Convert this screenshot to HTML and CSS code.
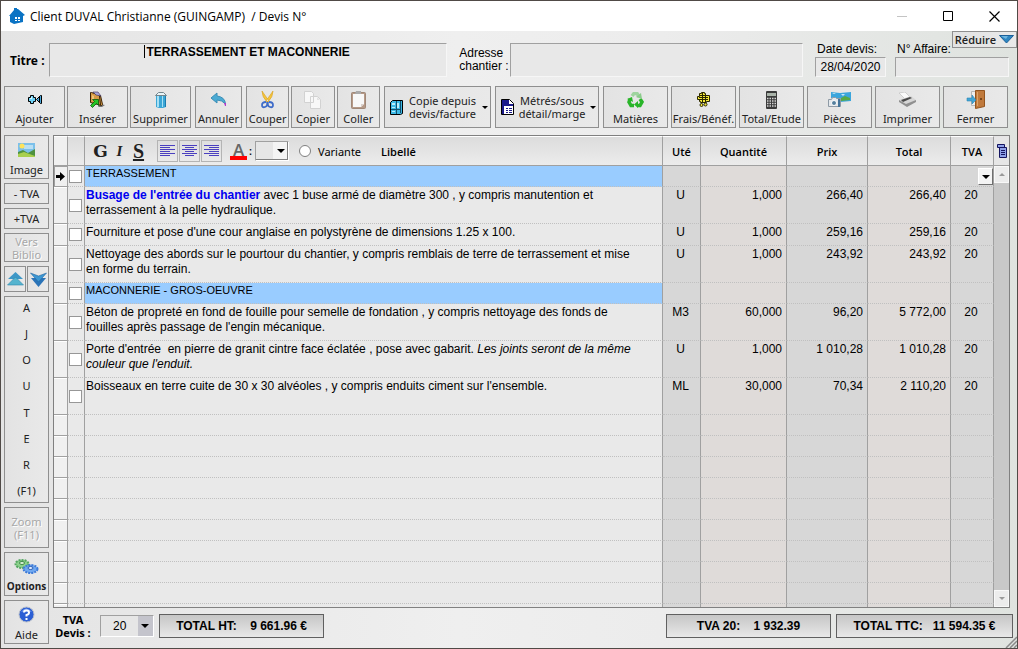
FILE: index.html
```html
<!DOCTYPE html>
<html lang="fr">
<head>
  <meta charset="UTF-8" />
  <meta name="viewport" content="width=device-width, initial-scale=1.0" />
  <title>Client DUVAL Christianne (GUINGAMP) / Devis N°</title>
  <link rel="stylesheet" href="styles.css">
</head>
<body>
<header class="titlebar">
  <svg class="logo" width="16" height="16" viewBox="0 0 16 16"><path fill="#0a73c4" d="M0 8 5 2V0h3v1l1 0 7 6-2 1v6l-9 2-4-2V8z"/><path fill="#fff" d="M6 9h2v2H6zM9 9h2v2H9zM6 12h2v1H6zM9 12h2v1H9z"/></svg>
  <h1>Client DUVAL Christianne (GUINGAMP)&nbsp; / Devis N°</h1>
  <div class="window-buttons">
    <button aria-label="Minimiser"><svg width="11" height="11" viewBox="0 0 11 11"><path stroke="#c4c4c4" d="M0 5.500h10"/></svg></button>
    <button aria-label="Agrandir"><svg width="11" height="11" viewBox="0 0 11 11"><path fill="none" stroke="#000" d="M.5.5h9v9h-9z"/></svg></button>
    <button aria-label="Fermer la fenêtre"><svg width="11" height="11" viewBox="0 0 11 11"><path fill="none" stroke="#000" stroke-width="1.200" d="M.5.5l10 10m0-10l-10 10"/></svg></button>
  </div>
</header>

<section class="infos">
  <label class="titre-label" for="titre">Titre :</label>
  <div class="titre-box">
    <input class="field" type="text" id="titre" value="TERRASSEMENT ET MACONNERIE">
    <span class="caret"></span>
  </div>
  <label class="adresse-label" for="adresse">Adresse<br>chantier :</label>
  <textarea class="field adresse" id="adresse"></textarea>
  <div class="date-devis">
    <label for="date">Date devis:</label>
    <input class="field" type="text" id="date" value="28/04/2020">
  </div>
  <div class="affaire">
    <div class="affaire-top">
      <label for="affaire">N° Affaire:</label>
      <button class="btn reduire">Réduire <svg width="15" height="9" viewBox="0 0 15 9"><path fill="#2e86c1" stroke="#1b5f99" d="M.5.5h14L7.500 8z"/><path fill="#6db5e0" d="M2 1h7L7 4z"/></svg></button>
    </div>
    <input class="field" type="text" id="affaire">
  </div>
</section>

<nav class="toolbar">
  <div class="group three">
    <button class="btn"><svg width="16" height="16" viewBox="0 0 16 16"><path fill="#6fd3f7" stroke="#000" d="M3.500 3.500h3v2h2v4h-2v2h-3v-2h-2v-4h2z"/><path fill="#d9f5ff" d="M4 5h1v2H3V6h1z"/><path fill="#4aa9dc" stroke="#000" d="M9.500 7.500l4-4h1v8h-1z"/><path stroke="#000" d="M12.500 5v5"/></svg>Ajouter</button>
    <button class="btn"><svg width="17" height="17" viewBox="0 0 17 17"><path fill="#777" d="M11 13l5 1-3 2h-4z"/><path fill="#d69b45" stroke="#3a2205" d="M1.500 1.500h1l9 3 2 9-1 1-11-3z"/><path fill="#a9a7d8" stroke="#3a2a55" stroke-width=".6" d="M4 1h5l3 4-5-1z"/><path fill="#efc27a" d="M3 4l2 1v5l-2-1z"/><path stroke="#3a2205" d="M10.500 5l1 9"/><path fill="#25c425" stroke="#0a570a" stroke-width=".8" d="M1.500 14.500l4-4-2-2h6v6l-2-2-4 4z"/></svg>Insérer</button>
    <button class="btn"><svg width="12" height="17" viewBox="0 0 12 17"><path fill="#3aa6d6" d="M1 4h10v12l-3 1H4l-3-1z"/><path fill="#a7e0f4" d="M2 5h2v11H2zM7 5h1v11H7z"/><path fill="#1c7cae" d="M10 5h1v11h-1z"/><path fill="#e9f4f7" stroke="#73858c" d="M.5 4.500l3-3h5l3 3z"/></svg>Supprimer</button>
  </div>
  <button class="btn"><svg width="17" height="15" viewBox="0 0 17 15"><path fill="#4aaad3" stroke="#3a8eb6" d="M1 6l6-5v3q8 1 8.500 8Q12 8 7 8v3z"/><path fill="#b13bc9" d="M14 11h2v3h-1z"/></svg>Annuler</button>
  <div class="group three">
    <button class="btn"><svg width="13" height="18" viewBox="0 0 13 18"><path fill="#f5c640" stroke="#d79f1d" stroke-width=".6" d="M1 0l7 10-2 1Q1 6 1 0zM12 0L5 10l2 1q5-5 5-11z"/><path fill="none" stroke="#3f6cc9" stroke-width="1.800" d="M5 11q-4 0-4 3t3 2 2-5m2 0q4 0 4 3t-3 2-2-5"/></svg>Couper</button>
    <button class="btn"><svg width="17" height="18" viewBox="0 0 17 18"><path fill="#f8f8f8" stroke="#d2d2d2" d="M.5.500h7l2 2v9h-9zM6.500 5.500h7l3 3v9h-10z"/><path fill="#e3e3e3" d="M13 6v3h3z"/></svg>Copier</button>
    <button class="btn"><svg width="15" height="18" viewBox="0 0 15 18"><rect x=".5" y="1.500" width="14" height="16" rx="1" fill="#b69a88" stroke="#a08878"/><path fill="#f8f8f8" d="M2 3h11v10l-3 3H2z"/><path fill="#d8d0cc" d="M13 13l-3 3v-3z"/><path fill="#aaa" d="M5 0h5v3H4z"/></svg>Coller</button>
  </div>
  <button class="btn wide"><svg width="13" height="16" viewBox="0 0 13 16"><path fill="#3db9e6" stroke="#000" d="M2.500 1.500h10v13l-2 1h-10v-12z"/><path fill="#bcecfa" d="M2 4h3v2H2zM2 8h3v1H2zM7 4h2v5H7zM2 12h3v1H2z"/><path stroke="#12516f" d="M6.500 2v13M10.500 2v12M1 10.500h9"/></svg><span>Copie depuis<br>devis/facture</span><i class="arrow"></i></button>
  <button class="btn wide"><svg width="13" height="16" viewBox="0 0 13 16"><path fill="#fff" stroke="#000" d="M.5.5h8l4 4v11H.5z"/><path fill="#1b1b8c" d="M1 1h7v4h4v2H1zM1 7h2v8H1z"/><path stroke="#1b1b8c" d="M5 9.500h2m1 0h3M5 11.500h2m1 0h3M5 13.500h2m1 0h3"/></svg><span>Métrés/sous<br>détail/marge</span><i class="arrow"></i></button>
  <div class="group six">
    <button class="btn"><svg width="17" height="16" viewBox="0 0 17 16"><g fill="none" stroke-width="3.500"><path stroke="#9fd49f" d="M5 4l2-2.500h3l2 3"/><path stroke="#29b529" d="M13 7l2 3-2 3.500h-3M3 7l-1 3 2 3.500h3"/></g><path fill="#29b529" d="M11 9v7l-4-3.500zM0 7l5-2 1 5z"/><path fill="#8bcb8b" d="M14 1l1 6-6-2z"/></svg>Matières</button>
    <button class="btn"><svg width="15" height="17" viewBox="0 0 15 17"><path fill="#f4e93a" stroke="#2a2600" d="M3.500 2.500h2v-1h3v1h1v2h4v6h-3v1h-6v-1h-1v-2h-2v-3h2z"/><path stroke="#2a2600" d="M3 4.500h6M3 6.500h9M3 8.500h9M6.500 2v9M9.500 4v7"/><circle cx="5.500" cy="14" r="1.500" fill="#f4e93a" stroke="#2a2600"/><circle cx="9.500" cy="13.500" r="1.500" fill="#f4e93a" stroke="#2a2600"/></svg>Frais/Bénéf.</button>
    <button class="btn"><svg width="11" height="18" viewBox="0 0 11 18"><rect width="11" height="18" rx="1" fill="#3b3b3b"/><path fill="#aab4aa" d="M1 2h9v3H1z"/><path stroke="#d6d6d6" stroke-width="1.500" stroke-dasharray="1.500 1" d="M1 7.500h9M1 10h9M1 12.500h9M1 15h9"/></svg>Total/Etude</button>
    <button class="btn"><svg width="24" height="17" viewBox="0 0 24 17"><path fill="#3aa5dc" d="M3 1l9 1v6l-9-1zM12 2l11-1v9l-11 1z"/><path fill="#c7e8f6" d="M13 3h4l-2 2zM4 2h4l-2 1z"/><path fill="#57a944" d="M13 7l4-2 5 2v2l-9 1z"/><path fill="#e4e8ec" stroke="#8e9aa5" d="M.5 8.500h3l1-2h3l1 1h4v8H.5z"/><circle cx="6" cy="12" r="2.500" fill="#547f9e" stroke="#fff"/><path fill="#44749a" d="M10 8h2v8h-2z"/></svg>Pièces</button>
    <button class="btn"><svg width="19" height="15" viewBox="0 0 19 15"><path fill="#fafafa" stroke="#c2c2c2" stroke-width=".7" d="M1 1l6-1 5 5-5 2z"/><path fill="#d6d6d6" d="M1 8l12-4 5 4-10 6z"/><path fill="#4a4a4a" d="M3 8l9-3 2 1-9 4z"/><path fill="#909090" d="M1 8l7 4 10-4v2l-9 5-8-5z"/></svg>Imprimer</button>
    <button class="btn"><svg width="20" height="19" viewBox="0 0 20 19"><path fill="#eee" stroke="#b7b7b7" d="M5.500 1.500h8v14h-8z"/><path fill="#c07a3d" stroke="#94551f" d="M9.500.500h9v16l-9 2z"/><path fill="#dda269" d="M11 2h1v14h-1z"/><circle cx="15" cy="9" r="1" fill="#613610"/><path fill="#42a5d5" stroke="#2b86b5" stroke-width=".6" d="M1 8h5V5l4 5-4 4v-3H1z"/></svg>Fermer</button>
  </div>
</nav>

<main class="content">
  <aside class="sidebar">
    <button class="btn tall"><svg width="17" height="16" viewBox="0 0 17 16"><path fill="#7cc0ea" d="M0 1h17v14H0z"/><path fill="#b9dff3" d="M6 3h9v4H6z"/><path fill="#4f9140" d="M0 10l5-2 5 3 7-4v8H0z"/><path fill="#a8cf4d" d="M0 12l6-2 11 4v1H0z"/><circle cx="4" cy="4" r="2.500" fill="#ffe35a"/></svg>Image</button>
    <button class="btn small">- TVA</button>
    <button class="btn small">+TVA</button>
    <button class="btn biblio" disabled>Vers<br>Biblio</button>
    <div class="fleches">
      <button class="btn" aria-label="Monter"><svg width="17" height="14" viewBox="0 0 17 14"><path fill="#3e97c7" d="M8.500 0L16 7H1z"/><path fill="#55b4cf" stroke="#2f86ad" stroke-width=".6" d="M8.500 5l8 8H.5z"/></svg></button>
      <button class="btn" aria-label="Descendre"><svg width="17" height="15" viewBox="0 0 17 15"><path fill="#2b74b8" d="M1 6h15l-7.500 9z"/><path fill="#3c97d2" stroke="#2468a5" stroke-width=".6" d="M.5 1L8.500 4l8-3-8 9z"/></svg></button>
    </div>
    <button class="btn ajouter"><span>A</span><span>J</span><span>O</span><span>U</span><span>T</span><span>E</span><span>R</span><span>(F1)</span></button>
    <button class="btn zoom" disabled>Zoom<br>(F11)</button>
    <button class="btn tall options"><svg width="25" height="17" viewBox="0 0 25 17"><ellipse cx="8" cy="6" rx="6.500" ry="4" fill="#8bd18b" stroke="#55a661" stroke-width="2" stroke-dasharray="2 1"/><ellipse cx="8" cy="5" rx="2.500" ry="1.500" fill="#e2f5df" stroke="#3d8847"/><ellipse cx="16.500" cy="11" rx="7" ry="4" fill="#6fa8f0" stroke="#3e7bd8" stroke-width="2" stroke-dasharray="2 1"/><ellipse cx="16.500" cy="10" rx="2.500" ry="1.500" fill="#dceafd" stroke="#2c5cb2"/></svg>Options</button>
    <button class="btn tall"><svg width="17" height="17" viewBox="0 0 17 17"><circle cx="8.500" cy="8.500" r="7.500" fill="#2c5fd4" stroke="#b9bfca"/><path fill="#7ea4f3" d="M3 6q5-7 11 0-6-2-11 0z"/><path fill="none" stroke="#fff" stroke-width="2" d="M6 6.500q0-2 2.500-2t2.500 2-2.500 2.500v1.500M8.500 12v2"/></svg>Aide</button>
  </aside>

  <div class="devis">
    <div class="grid">
      <table>
        <colgroup>
          <col class="c-mark"><col class="c-check"><col><col class="c-ute"><col class="c-qte"><col class="c-prix"><col class="c-total"><col class="c-tva">
        </colgroup>
        <thead>
          <tr>
            <th></th>
            <th></th>
            <th>
              <div class="format">
                <button class="gras" aria-label="Gras">G</button>
                <button class="ital" aria-label="Italique">I</button>
                <button class="soul" aria-label="Souligné">S</button>
                <div class="aligns">
                  <button aria-label="Gauche"><svg width="15" height="12" viewBox="0 0 15 12"><path stroke="#4a3fc0" d="M0 .5h15M0 2.500h10M0 4.500h15M0 6.500h10M0 8.500h15M0 10.500h10"/></svg></button>
                  <button aria-label="Centre"><svg width="15" height="12" viewBox="0 0 15 12"><path stroke="#4a3fc0" d="M0 .5h15M3 2.500h9M0 4.500h15M3 6.500h9M0 8.500h15M3 10.500h9"/></svg></button>
                  <button aria-label="Droite"><svg width="15" height="12" viewBox="0 0 15 12"><path stroke="#4a3fc0" d="M0 .5h15M5 2.500h10M0 4.500h15M5 6.500h10M0 8.500h15M5 10.500h10"/></svg></button>
                </div>
                <label class="couleur" for="couleur"><b>A</b>:</label>
                <span class="combo combo-couleur"><select id="couleur"><option></option></select><i class="arrow"></i></span>
                <label class="variante"><input type="radio" name="variante">Variante</label>
                <span>Libellé</span>
              </div>
            </th>
            <th>Uté</th>
            <th>Quantité</th>
            <th>Prix</th>
            <th>Total</th>
            <th>TVA</th>
          </tr>
        </thead>
        <tbody>
          <tr class="chapitre">
            <td class="current"><svg width="9" height="9" viewBox="0 0 9 9"><path d="M0 3h4V0l5 4.500L4 9V6H0z"/></svg></td><td><input type="checkbox" aria-label="Terrassement"></td><td>TERRASSEMENT</td><td></td><td></td><td></td><td></td>
            <td class="tva-cell"><span class="combo combo-tva"><select aria-label="TVA de la ligne"><option></option></select><i class="arrow"></i></span></td>
          </tr>
          <tr class="double">
            <td></td><td><input type="checkbox" aria-label="Busage"></td><td><b class="lien">Busage de l'entrée du chantier</b> avec 1 buse armé de diamètre 300 , y compris manutention et<br>terrassement à la pelle hydraulique.</td><td>U</td><td>1,000</td><td>266,40</td><td>266,40</td><td>20</td>
          </tr>
          <tr class="simple">
            <td></td><td><input type="checkbox" aria-label="Cour anglaise"></td><td>Fourniture et pose d'une cour anglaise en polystyrène de dimensions 1.25 x 100.</td><td>U</td><td>1,000</td><td>259,16</td><td>259,16</td><td>20</td>
          </tr>
          <tr class="double">
            <td></td><td><input type="checkbox" aria-label="Nettoyage"></td><td>Nettoyage des abords sur le pourtour du chantier, y compris remblais de terre de terrassement et mise<br>en forme du terrain.</td><td>U</td><td>1,000</td><td>243,92</td><td>243,92</td><td>20</td>
          </tr>
          <tr class="chapitre">
            <td></td><td><input type="checkbox" aria-label="Maçonnerie"></td><td>MACONNERIE - GROS-OEUVRE</td><td></td><td></td><td></td><td></td><td></td>
          </tr>
          <tr class="double">
            <td></td><td><input type="checkbox" aria-label="Béton de propreté"></td><td>Béton de propreté en fond de fouille pour semelle de fondation , y compris nettoyage des fonds de<br>fouilles après passage de l'engin mécanique.</td><td>M3</td><td>60,000</td><td>96,20</td><td>5 772,00</td><td>20</td>
          </tr>
          <tr class="double">
            <td></td><td><input type="checkbox" aria-label="Porte d'entrée"></td><td>Porte d'entrée&nbsp; en pierre de granit cintre face éclatée , pose avec gabarit. <em>Les joints seront de la même<br>couleur que l'enduit.</em></td><td>U</td><td>1,000</td><td>1 010,28</td><td>1 010,28</td><td>20</td>
          </tr>
          <tr class="double">
            <td></td><td><input type="checkbox" aria-label="Boisseaux"></td><td>Boisseaux en terre cuite de 30 x 30 alvéoles , y compris enduits ciment sur l'ensemble.</td><td>ML</td><td>30,000</td><td>70,34</td><td>2 110,20</td><td>20</td>
          </tr>
          <tr class="vide"><td></td><td></td><td></td><td></td><td></td><td></td><td></td><td></td></tr>
          <tr class="vide"><td></td><td></td><td></td><td></td><td></td><td></td><td></td><td></td></tr>
          <tr class="vide"><td></td><td></td><td></td><td></td><td></td><td></td><td></td><td></td></tr>
          <tr class="vide"><td></td><td></td><td></td><td></td><td></td><td></td><td></td><td></td></tr>
          <tr class="vide"><td></td><td></td><td></td><td></td><td></td><td></td><td></td><td></td></tr>
          <tr class="vide"><td></td><td></td><td></td><td></td><td></td><td></td><td></td><td></td></tr>
          <tr class="vide"><td></td><td></td><td></td><td></td><td></td><td></td><td></td><td></td></tr>
          <tr class="vide"><td></td><td></td><td></td><td></td><td></td><td></td><td></td><td></td></tr>
          <tr class="vide"><td></td><td></td><td></td><td></td><td></td><td></td><td></td><td></td></tr>
          <tr class="reste"><td></td><td></td><td></td><td></td><td></td><td></td><td></td><td></td></tr>
        </tbody>
      </table>
      <div class="scroll">
        <button class="colonnes" aria-label="Colonnes"><svg width="10" height="14" viewBox="0 0 10 14"><path fill="#8ea0e8" stroke="#151560" d="M.5.500h7v3h-7zM2.500 3.500h7v10h-7z"/><path stroke="#151560" d="M4 6.500h4M4 8.500h4M4 10.500h4"/></svg></button>
        <button class="fleche-scroll" aria-label="Défiler vers le haut"><i class="arrow up"></i></button>
        <div class="piste"></div>
        <button class="fleche-scroll" aria-label="Défiler vers le bas"><i class="arrow"></i></button>
      </div>
    </div>

    <footer class="totaux">
      <label class="tva-label" for="tva">TVA<br>Devis :</label>
      <span class="combo combo-devis"><select id="tva"><option>20</option></select><i class="arrow"></i></span>
      <output class="total">TOTAL HT:    9 661.96 €</output>
      <output class="total droite">TVA 20:    1 932.39</output>
      <output class="total ttc">TOTAL TTC:   11 594.35 €</output>
    </footer>
  </div>
</main>
<svg class="grip" width="12" height="12" viewBox="0 0 12 12"><path stroke="#8a8a8a" stroke-width="1.500" d="M1 12L12 1M5 12l7-7M9 12l3-3"/></svg>
</body>
</html>
```
FILE: styles.css
```css
:root {
  --ui: "Noto Sans", "Open Sans", sans-serif;
  --texte: "Liberation Sans", Arial, sans-serif;
  --trait: #a0a0a0;
  --bleu: #99ccff;
}

* { box-sizing: border-box; margin: 0; padding: 0; }

body {
  font-family: var(--texte);
  font-size: 12px;
  color: #000;
  background: linear-gradient(to right, #e4e4e4, #efefef 45%, #ececec 65%, #dfe3df);
  border: 1px solid #504a46;
  height: 100vh;
  display: flex;
  flex-direction: column;
  position: relative;
  overflow: hidden;
}

button, input, select, textarea {
  font: inherit;
  color: inherit;
  border-radius: 0;
}

button { border: none; background: none; }

/* barre de titre */
.titlebar {
  height: 30px;
  background: #fff;
  display: flex;
  align-items: center;
  padding-left: 8px;
  gap: 5px;
}

.titlebar h1 {
  flex: 1;
  font: 400 12px "Open Sans", sans-serif;
}

.window-buttons { display: flex; }

.window-buttons button {
  width: 46px;
  height: 28px;
  display: grid;
  place-items: center;
}

/* titre, adresse, date */
.infos {
  height: 55px;
  padding-top: 3px;
  display: flex;
  align-items: center;
}

.field {
  border: 1px solid #f6f6f6;
  border-top-color: var(--trait);
  border-left-color: var(--trait);
  background: #e8e8e8;
  outline: none;
  resize: none;
}

.titre-label {
  font: 700 12px var(--ui);
  width: 48px;
  padding-left: 9px;
}

.titre-box {
  flex: 400;
  height: 34px;
  position: relative;
}

.titre-box .field {
  width: 100%;
  height: 100%;
  padding-bottom: 16px;
  text-align: center;
  font-weight: 700;
}

.caret {
  position: absolute;
  left: calc(50% - 104px);
  top: 2px;
  width: 1px;
  height: 13px;
  background: #000;
}

.adresse-label {
  width: 63px;
  padding-left: 12px;
  line-height: 13px;
  white-space: nowrap;
}

.adresse { flex: 292; height: 34px; }

.date-devis, .affaire {
  align-self: stretch;
  display: flex;
  flex-direction: column;
  margin-top: -3px;
}

.date-devis { width: 71px; margin-left: 12px; margin-right: 9px; }

.date-devis label, .affaire label {
  height: 26px;
  line-height: 16px;
  padding: 10px 0 0 2px;
  white-space: nowrap;
}

.date-devis .field, .affaire .field { height: 20px; width: 100%; }
.date-devis .field { text-align: center; }

.affaire { width: 122px; }
.affaire .field { width: 114px; }

.affaire-top {
  display: flex;
  justify-content: space-between;
  height: 26px;
}

.btn {
  border: 1px solid #8f8f8f;
  background: linear-gradient(to right, #e3e3e3, #e9e9e9);
  font-family: var(--ui);
  font-size: 11px;
  line-height: 14px;
  color: #222;
  white-space: nowrap;
}

.btn:disabled { color: #a8a8a8; text-shadow: 1px 1px #fff; }

.reduire {
  height: 17px;
  width: 65px;
  font-family: "Open Sans", sans-serif;
  font-weight: 600;
  display: flex;
  align-items: center;
  justify-content: center;
  gap: 3px;
}

/* barre d'outils */
.toolbar {
  display: grid;
  grid-template-columns: 187fr 47fr 134fr 107fr 104fr 405fr;
  gap: 4px;
  height: 42px;
  padding: 0 9px 0 3px;
}

.group { display: grid; gap: 2px; }
.three { grid-template-columns: repeat(3, 1fr); }
.six { grid-template-columns: repeat(6, 1fr); gap: 3px; }

.toolbar .btn {
  min-width: 0;
  display: flex;
  flex-direction: column;
  align-items: center;
  justify-content: flex-end;
  padding-bottom: 1px;
}

.toolbar .btn svg { margin: auto; }

.toolbar .wide {
  flex-direction: row;
  align-items: center;
  justify-content: space-between;
  padding: 0 2px 0 5px;
  line-height: 13px;
}

.toolbar .wide svg { margin: 0; }

.arrow {
  border: 3px solid transparent;
  border-top-color: #000;
  border-bottom: none;
}

.arrow.up { border-bottom: 3px solid #000; border-top: none; }

/* colonne de gauche */
.content {
  flex: 1;
  min-height: 0;
  display: flex;
  gap: 4px;
  padding: 7px 0 4px 3px;
}

.sidebar {
  width: 45px;
  display: flex;
  flex-direction: column;
  gap: 4px;
}

.sidebar .btn { line-height: 13px; }

.tall {
  height: 44px;
  display: flex;
  flex-direction: column;
  align-items: center;
  justify-content: flex-end;
  padding-bottom: 2px;
}

.tall svg { margin: auto; }
.small { height: 21px; }
.biblio { height: 29px; }
.zoom { height: 41px; }
.sidebar .options { font: 700 10px/13px "Open Sans", sans-serif; }

.fleches {
  display: grid;
  grid-template-columns: 1fr 1fr;
  height: 26px;
  gap: 1px;
}

.fleches .btn { display: grid; place-items: center; }

.ajouter {
  flex: 1;
  display: flex;
  flex-direction: column;
  align-items: center;
  justify-content: space-between;
}

.sidebar .ajouter span { line-height: 22px; }

/* tableau du devis */
.devis {
  flex: 1;
  min-width: 0;
  display: flex;
  flex-direction: column;
}

.grid {
  flex: 1;
  min-height: 0;
  margin-right: 7px;
  display: flex;
  border: 1px solid #808080;
}

table {
  flex: 1;
  height: 100%;
  table-layout: fixed;
  border-collapse: separate;
  border-spacing: 0;
  font-size: 12px;
  line-height: 15px;
}

.c-mark { width: 14px; }
.c-check { width: 17px; }
.c-ute { width: 38px; }
.c-qte { width: 86px; }
.c-prix { width: 81px; }
.c-total { width: 83px; }
.c-tva { width: 43px; }

th {
  height: 30px;
  font: 600 11px "Open Sans", sans-serif;
  background: linear-gradient(#dcdcdc, #ececec);
  border-right: 1px solid var(--trait);
  border-bottom: 1px solid var(--trait);
  border-top: 1px solid #fff;
}

th:first-child { background: #f0f0f0; }

td {
  background: #e9e9e9;
  border-right: 1px solid var(--trait);
  border-bottom: 1px dotted #c0c0c0;
  vertical-align: top;
  text-align: center;
}

td:nth-child(1) {
  background: #f0f0f0;
  border-bottom: 1px solid var(--trait);
  box-shadow: inset 0 1px #fff;
}

td:nth-child(1), td:nth-child(2) { vertical-align: middle; line-height: 0; }
td:nth-child(2) { text-align: left; padding-left: 1px; }
td:nth-child(3) { text-align: left; padding-left: 1px; white-space: nowrap; overflow: hidden; }
td:nth-child(4), td:nth-child(6), td:nth-child(8) { background: #d7d7d7; }
td:nth-child(5), td:nth-child(7) { background: #dfdbd9; }
td:nth-child(5), td:nth-child(6), td:nth-child(7) { text-align: right; padding-right: 4px; }
td:nth-child(4), td:nth-child(8) { padding-right: 2px; }

.chapitre td, .vide td { height: 21px; }
.chapitre td:nth-child(3) { background: var(--bleu); font-size: 11px; }
.simple td { height: 22px; }
.double td { height: 37px; }
.simple td:nth-child(n+3), .double td:nth-child(n+3) { padding-top: 1px; }
.reste td { border-bottom: none; }
.chapitre .tva-cell { padding: 0; text-align: right; line-height: 0; }

td.current { box-shadow: inset 1px 1px var(--trait); }

.lien { color: #0000f0; }

input[type="checkbox"] {
  appearance: none;
  width: 13px;
  height: 13px;
  border: 1px solid #979797;
  background: #fff;
}

/* mise en forme du libellé */
.format {
  display: flex;
  align-items: center;
  height: 28px;
  padding-left: 6px;
}

.gras, .ital, .soul {
  font: 700 17px "DejaVu Serif", serif;
  color: #222;
  width: 19px;
}

.ital { font: italic 700 15px "Liberation Serif", serif; }
.soul { font: 700 20px "Liberation Serif", serif; text-decoration: underline; }

.aligns { display: flex; gap: 1px; margin: 0 8px 0 9px; }

.aligns button {
  width: 21px;
  height: 22px;
  border: 1px solid #b4b4b4;
  display: grid;
  place-items: center;
}

.couleur { display: flex; gap: 2px; width: 25px; }

.couleur b {
  width: 17px;
  height: 17px;
  border-bottom: 4px solid #f00;
  font: 600 17px/14px "Open Sans", sans-serif;
  color: #666;
}

.combo { display: inline-grid; align-items: stretch; }

.combo select {
  grid-area: 1 / 1;
  appearance: none;
  border: 1px solid #fff;
  border-top-color: var(--trait);
  border-left-color: var(--trait);
  background: #e6e6e6;
}

.combo .arrow {
  grid-area: 1 / 1;
  pointer-events: none;
  justify-self: end;
  align-self: center;
  border-width: 4px 4px 0;
}

.combo-couleur { width: 34px; height: 20px; }
.combo-couleur select { background: linear-gradient(to left, #f4f4f4 15px, #e6e6e6 15px); box-shadow: inset -1px -1px #808080; }
.combo-couleur .arrow { margin-right: 4px; }

.combo-tva { width: 15px; height: 17px; margin-top: 2px; }
.combo-tva select { background: #f4f4f4; border-color: #fff #707070 #707070 #fff; }
.combo-tva .arrow { margin-right: 3px; }

.variante {
  display: flex;
  align-items: center;
  gap: 7px;
  margin: 0 20px 0 10px;
  font: 400 11px var(--ui);
}

.variante input {
  appearance: none;
  width: 12px;
  height: 12px;
  border: 1px solid #808080;
  border-radius: 50%;
  background: #fff;
}

/* ascenseur */
.scroll {
  width: 15px;
  display: flex;
  flex-direction: column;
  background: #c8c8c8;
}

.colonnes {
  height: 30px;
  background: #e6e6e6;
  border-bottom: 1px solid var(--trait);
  display: grid;
  place-items: center;
}

.fleche-scroll {
  height: 17px;
  background: #ececec;
  border: 1px solid #f8f8f8;
  display: grid;
  place-items: center;
}

.fleche-scroll .arrow { opacity: 0.35; }
.piste { flex: 1; }

/* totaux */
.totaux {
  height: 36px;
  display: flex;
  align-items: center;
  gap: 5px;
  padding-right: 4px;
}

.tva-label {
  width: 42px;
  padding-right: 2px;
  text-align: center;
  font: 700 11px/13px var(--ui);
}

.combo-devis { width: 54px; height: 22px; }
.combo-devis select { padding-left: 12px; background: linear-gradient(to left, #c4c4cc 15px, #e6e6e6 15px); }
.combo-devis .arrow { margin-right: 5px; }

.total {
  width: 165px;
  height: 24px;
  border: 1px solid #606060;
  background: linear-gradient(#c6c6c6, #e8e8e8);
  text-align: center;
  font-weight: 700;
  font-size: 12px;
  line-height: 22px;
  white-space: pre;
}

.droite { margin-left: auto; }
.ttc { width: 177px; }

.grip {
  position: absolute;
  right: 0;
  bottom: 0;
}
```
